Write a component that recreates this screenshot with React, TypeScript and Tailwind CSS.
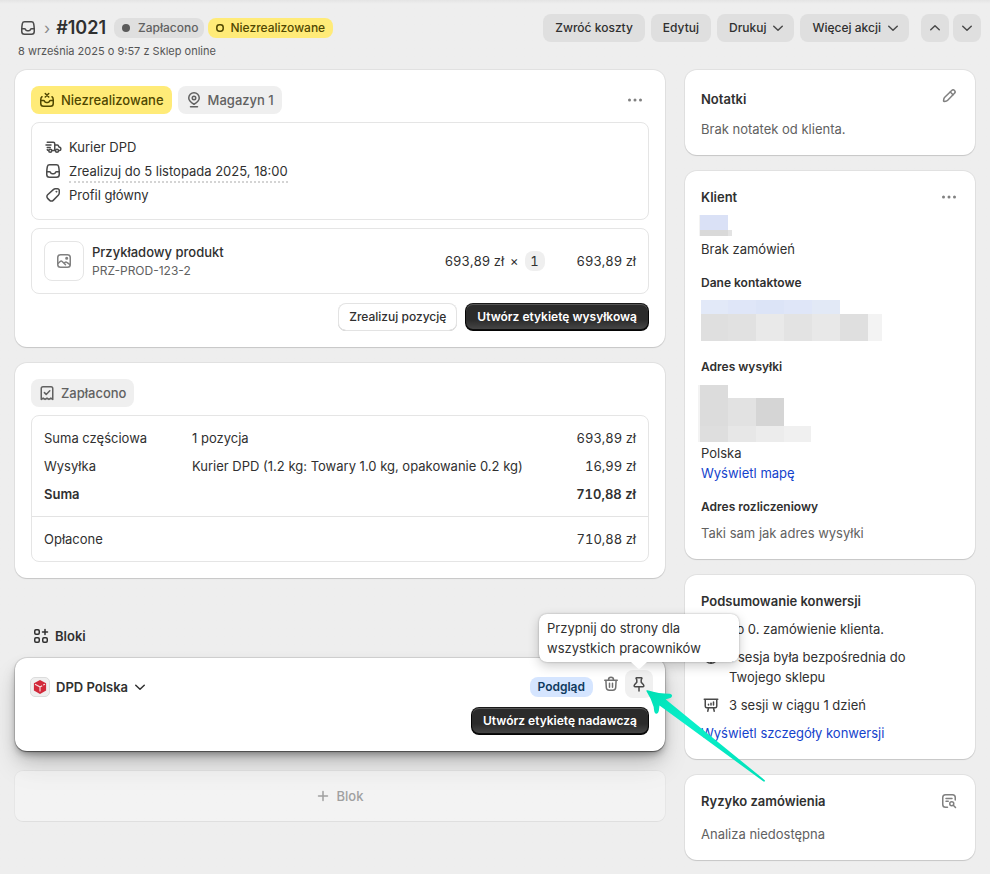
import type { ReactNode } from "react";
import { clsx } from "clsx";

const iconPaths = {
  order: (
    <>
      <path d="M6.6 3.75h6.8a2.3 2.3 0 0 1 2.25 1.85c.4 1.9.6 3.5.6 5.4v2.5a2.75 2.75 0 0 1-2.75 2.75h-7a2.75 2.75 0 0 1-2.75-2.75V11c0-1.9.2-3.5.6-5.4A2.3 2.3 0 0 1 6.6 3.75Z" />
      <path d="M3.9 10.75h2.5c.5 0 .9.3 1.1.7.3.8.9 1.3 1.7 1.3h1.6c.8 0 1.4-.5 1.7-1.3.2-.4.6-.7 1.1-.7h2.5" />
    </>
  ),
  unfulfilled: (
    <>
      <path d="M8.25 3.5l3.5 3.5m0-3.5l-3.5 3.5" />
      <path d="M5 6.75c-.8.5-1.25 1.500-1.250 3v3.750a2.750 2.750 0 0 0 2.750 2.750h7a2.750 2.750 0 0 0 2.750-2.750V9.750c0-1.500-.45-2.500-1.250-3" />
      <path d="M3.900 10.500h2.500c.5 0 .9.3 1.100.7.3.8.9 1.300 1.700 1.300h1.600c.8 0 1.400-.5 1.700-1.300.2-.4.6-.7 1.100-.7h2.500" />
    </>
  ),
  location: (
    <>
      <path d="M10 14.250c2.600-1.500 5.250-3.600 5.250-6.250a5.250 5.250 0 0 0-10.500 0c0 2.650 2.650 4.750 5.250 6.250Z" />
      <circle cx="10" cy="8" r="1.750" />
      <path d="M6.500 16.750h7" />
    </>
  ),
  truck: (
    <>
      <path d="M4.250 5.250h6a1.500 1.500 0 0 1 1.500 1.500v6.750H9M3 8h5M4.250 10.500h3M12 8h2.300c.4 0 .8.2 1 .6l.7 1.400 1.200.5c.4.2.6.5.6.9v.85c0 .7-.5 1.250-1.250 1.250h-.8M5.500 13.500c-.8 0-1.250-.4-1.250-1" />
      <circle cx="7.250" cy="13.750" r="1.500" />
      <circle cx="14" cy="13.750" r="1.500" />
    </>
  ),
  tag: (
    <>
      <path d="M10.600 4.400a2.250 2.250 0 0 1 1.600-.65h2.300a1.750 1.750 0 0 1 1.750 1.750v2.600c0 .7-.25 1.350-.75 1.850l-5.300 5.400a2.500 2.500 0 0 1-3.550 0l-2-2a2.500 2.500 0 0 1 0-3.550Z" />
      <circle cx="13.300" cy="6.700" r=".5" fill="currentColor" strokeWidth=".8" />
    </>
  ),
  image: (
    <>
      <rect x="3.750" y="3.750" width="12.500" height="12.500" rx="2.750" />
      <path d="M4 12.500l2.200-2c.6-.5 1.400-.5 2 0l3.300 3.200M10 12.300l1.100-.9c.5-.4 1.200-.4 1.700 0l3.200 2.300" />
      <circle cx="12.700" cy="7.300" r=".8" fill="currentColor" />
    </>
  ),
  receipt: (
    <>
      <path d="M4.250 16.400V5.500c0-1 .75-1.750 1.750-1.750h8c1 0 1.750.75 1.750 1.750v10.900l-1.900-1.300-1.900 1.300-1.950-1.300-1.950 1.300-1.900-1.300Z" />
      <path d="M7.400 9.600l1.800 1.800 3.600-3.700" />
    </>
  ),
  blocks: (
    <>
      <rect x="3.750" y="3.750" width="4.500" height="4.500" rx="1.200" />
      <rect x="3.750" y="11.750" width="4.500" height="4.500" rx="1.200" />
      <rect x="11.750" y="11.750" width="4.500" height="4.500" rx="1.200" />
      <path d="M14 3.500v5M11.500 6h5" />
    </>
  ),
  edit: (
    <>
      <path d="M12.700 4.500a1.980 1.980 0 0 1 2.800 2.800l-6.800 6.900c-.5.5-1.200.85-1.900.95l-1.700.25c-.35.05-.6-.2-.55-.55l.25-1.700c.1-.7.45-1.350.95-1.850Z" />
      <path d="M11.300 6l2.700 2.700" />
    </>
  ),
  risk: (
    <>
      <path d="M8.500 16.250h-2a2.750 2.750 0 0 1-2.750-2.750v-7a2.750 2.750 0 0 1 2.750-2.750h7a2.750 2.750 0 0 1 2.750 2.750v2.500M7 7.500h6M7 10.250h2.250" />
      <circle cx="12.750" cy="12.750" r="2" />
      <path d="M14.300 14.300l2.200 2.200" />
    </>
  ),
  trash: (
    <path d="M3.750 6.250h12.500M7.500 6v-.25a2.500 2.500 0 0 1 5 0V6M4.900 6.500l.4 7c.1 1.700 1.300 2.750 3 2.750h3.400c1.700 0 2.900-1.050 3-2.750l.4-7M8.500 9.250v4M11.500 9.250v4" />
  ),
  pin: (
    <path d="M7.500 3.750h5c.4 0 .6.4.4.7l-.6 1.100c-.1.2-.1.4-.1.600v2l2.300 2.700c.7.9.3 1.900-.7 1.900H6.200c-1 0-1.400-1-.7-1.900l2.300-2.700v-2c0-.2 0-.4-.1-.6l-.6-1.100c-.2-.3 0-.7.4-.7ZM10 13v4" />
  ),
  sessions: (
    <path d="M3.250 4.250h13.500M4.250 4.500v6.750c0 .8.7 1.500 1.500 1.500h8.500c.8 0 1.500-.7 1.500-1.500V4.500M7.500 13l-.75 3.250M12.500 13l.75 3.250M7.500 9.250v.75M10 8.250V10M12.500 7v3" />
  ),
  globe: (
    <>
      <circle cx="10" cy="10" r="6.250" />
      <path d="M4 10h12M10 4c-3 3.500-3 8.500 0 12M10 4c3 3.500 3 8.500 0 12" />
    </>
  ),
  person: (
    <>
      <circle cx="10" cy="7" r="2.750" />
      <path d="M4.500 15.500c1-2.500 3-3.500 5.500-3.500s4.500 1 5.500 3.500Z" />
    </>
  ),
  chevronDown: <path d="M5.750 8.250L10 12.250l4.250-4" />,
  chevronUp: <path d="M5.750 11.750L10 7.750l4.250 4" />,
  plus: <path d="M10 5.500v9M5.500 10h9" />,
  dots: (
    <g fill="currentColor" stroke="none">
      <circle cx="4.500" cy="10" r="1.500" />
      <circle cx="10" cy="10" r="1.500" />
      <circle cx="15.500" cy="10" r="1.500" />
    </g>
  ),
} as const;

type IconName = keyof typeof iconPaths;

function Icon({ name, className }: { name: IconName; className?: string }) {
  return (
    <svg
      viewBox="0 0 20 20"
      aria-hidden="true"
      fill="none"
      stroke="currentColor"
      strokeWidth="1.5"
      strokeLinecap="round"
      strokeLinejoin="round"
      className={clsx("size-5 shrink-0", className)}
    >
      {iconPaths[name]}
    </svg>
  );
}

function Card({ children, className }: { children: ReactNode; className?: string }) {
  return (
    <section
      className={clsx(
        "rounded-xl bg-white px-4 shadow-[0_0_0_1px_rgba(0,0,0,0.05),0_1px_1px_rgba(0,0,0,0.12)]",
        className,
      )}
    >
      {children}
    </section>
  );
}

function HeaderButton({ children, menu }: { children: ReactNode; menu?: boolean }) {
  return (
    <button
      type="button"
      className={clsx(
        "flex h-7 items-center gap-0.5 rounded-lg bg-[#dfdfdf] pl-3 text-xs font-[550]",
        menu ? "pr-1.5" : "pr-3",
      )}
    >
      {children}
      {menu && <Icon name="chevronDown" className="text-[#4a4a4a]" />}
    </button>
  );
}

function PrimaryButton({ children }: { children: ReactNode }) {
  return (
    <button
      type="button"
      className="h-7 rounded-lg bg-[#2b2b2b] bg-linear-to-b from-transparent from-60% to-white/15 px-3 text-xs font-semibold text-white shadow-[inset_0_-1px_0_1px_rgba(0,0,0,0.8),inset_0_0_0_1px_#1a1a1a,inset_0_1px_0_1px_rgba(255,255,255,0.2)]"
    >
      {children}
    </button>
  );
}

function StatusBadge({ icon, children, warning }: { icon: IconName; children: ReactNode; warning?: boolean }) {
  return (
    <span
      className={clsx(
        "flex h-7 items-center gap-1 rounded-lg pr-2 pl-1.5 font-[550]",
        warning ? "bg-[#ffeb78] text-[#4f4700]" : "bg-[#efefef] text-[#616161]",
      )}
    >
      <Icon name={icon} />
      {children}
    </span>
  );
}

// Pixelated rows that cover customer data
function Redacted({ rows, className }: { rows: { height: string; cells: string[] }[]; className?: string }) {
  return (
    <div aria-hidden="true" className={className}>
      {rows.map((row, i) => (
        <div key={i} className={clsx("flex", row.height)}>
          {row.cells.map((cell, j) => (
            <div key={j} className={cell} />
          ))}
        </div>
      ))}
    </div>
  );
}

const nameRows = [
  { height: "h-[15px]", cells: ["w-px bg-[#f3f3f3]", "w-7 bg-[#dae1f6]"] },
  { height: "h-[6px]", cells: ["w-px bg-[#f3f3f3]", "w-7 bg-[#d9d9d9]", "w-1 bg-[#e3e3e3]"] },
];

const contactRows = [
  {
    height: "h-[14px]",
    cells: ["w-[27px] bg-[#e2e9f8]", "w-7 bg-[#dfe6f8]", "w-7 bg-[#dce4f7]", "w-7 bg-[#dfe6f8]", "w-7 bg-[#e2e9f6]"],
  },
  {
    height: "h-[27px]",
    cells: [
      "w-[27px] bg-[#dfdfdf]",
      "w-7 bg-[#e1e1e1]",
      "w-7 bg-[#e9e9e9]",
      "w-7 bg-[#e3e3e3]",
      "w-7 bg-[#e8e8e8]",
      "w-7 bg-[#dfdfdf]",
      "w-[14px] bg-[#f3f3f3]",
    ],
  },
];

const addressRows = [
  { height: "h-[13px]", cells: ["w-0.5 bg-[#f3f3f3]", "w-7 bg-[#dcdcdc]"] },
  {
    height: "h-7",
    cells: ["w-0.5 bg-[#f3f3f3]", "w-7 bg-[#dcdcdc]", "w-7 bg-[#e2e2e2]", "w-7 bg-[#d5d5d5]"],
  },
  {
    height: "h-4",
    cells: ["w-0.5 bg-[#f3f3f3]", "w-7 bg-[#dedede]", "w-7 bg-[#e7e7e7]", "w-7 bg-[#ececec]", "w-[27px] bg-[#f0f0f0]"],
  },
];

const summary = [
  { label: "Suma częściowa", detail: "1 pozycja", amount: "693,89 zł" },
  { label: "Wysyłka", detail: "Kurier DPD (1.2 kg: Towary 1.0 kg, opakowanie 0.2 kg)", amount: "16,99 zł" },
  { label: "Suma", detail: "", amount: "710,88 zł", strong: true },
];

function Header() {
  return (
    <header className="flex items-start justify-between pr-[9px] pl-[18px]">
      <div>
        <div className="flex h-7 items-center">
          <Icon name="order" className="text-[#4a4a4a]" />
          <span className="mx-1.5 text-base text-[#8a8a8a]">›</span>
          <h1 className="text-lg font-semibold">#1021</h1>
          <span className="ml-2 flex h-5 items-center gap-1 rounded-lg bg-[#dfdfdf] px-1.5 text-xs font-[550] text-[#616161]">
            <span className="mr-1 ml-0.5 size-2 rounded-full bg-[#5a5a5a]" />
            Zapłacono
          </span>
          <span className="ml-1 flex h-5 items-center gap-1 rounded-lg bg-[#ffeb78] px-2 text-xs font-[550] text-[#4f4700]">
            <svg viewBox="0 0 8 8" aria-hidden="true" className="mr-0.5 size-2">
              <rect x="0.800" y="0.800" width="6.400" height="6.400" rx="2.600" fill="none" stroke="currentColor" strokeWidth="1.500" />
            </svg>
            Niezrealizowane
          </span>
        </div>
        <p className="text-[11px] leading-[18px] text-[#555]">8 września 2025 o 9:57 z Sklep online</p>
      </div>
      <div className="flex gap-1.5">
        <HeaderButton>Zwróć koszty</HeaderButton>
        <HeaderButton>Edytuj</HeaderButton>
        <HeaderButton menu>Drukuj</HeaderButton>
        <HeaderButton menu>Więcej akcji</HeaderButton>
        <div className="ml-1.5 flex gap-1">
          <button type="button" aria-label="Poprzednie" className="grid size-7 place-items-center rounded-lg bg-[#dfdfdf] text-[#4a4a4a]">
            <Icon name="chevronUp" />
          </button>
          <button type="button" aria-label="Następne" className="grid size-7 place-items-center rounded-lg bg-[#dfdfdf] text-[#4a4a4a]">
            <Icon name="chevronDown" />
          </button>
        </div>
      </div>
    </header>
  );
}

function FulfillmentCard() {
  return (
    <Card className="py-4">
      <div className="flex items-center gap-1.5">
        <StatusBadge icon="unfulfilled" warning>Niezrealizowane</StatusBadge>
        <StatusBadge icon="location">Magazyn 1</StatusBadge>
        <button type="button" aria-label="Więcej" className="mr-1 ml-auto text-[#808080]">
          <Icon name="dots" />
        </button>
      </div>
      <ul className="mt-2 rounded-lg border border-[#e5e5e5] px-[11px] py-3">
        <li className="flex h-6 items-center gap-1.5">
          <Icon name="truck" className="text-[#4a4a4a]" />
          Kurier DPD
        </li>
        <li className="flex h-6 items-center gap-1.5">
          <Icon name="order" className="text-[#4a4a4a]" />
          <span className="border-y-2 border-t-transparent border-b-[#d4d4d4] [border-bottom-style:dotted]">
            Zrealizuj do 5 listopada 2025, 18:00
          </span>
        </li>
        <li className="flex h-6 items-center gap-1.5">
          <Icon name="tag" className="text-[#4a4a4a]" />
          Profil główny
        </li>
      </ul>
      <div className="mt-2 flex items-center rounded-lg border border-[#e5e5e5] px-3 py-3">
        <div className="grid size-10 place-items-center rounded-lg border border-[#e5e5e5] text-[#808080]">
          <Icon name="image" />
        </div>
        <div className="ml-2 flex-1">
          <p className="font-[550]">Przykładowy produkt</p>
          <p className="text-xs leading-[18px] text-[#616161]">PRZ-PROD-123-2</p>
        </div>
        <p className="flex items-center gap-1.5 tabular-nums">
          693,89 zł <span>×</span>
          <span className="grid size-5 place-items-center rounded-lg bg-[#efefef]">1</span>
        </p>
        <p className="ml-8 tabular-nums">693,89 zł</p>
      </div>
      <div className="mt-[9px] flex justify-end gap-2">
        <button
          type="button"
          className="h-7 rounded-lg bg-white px-[11px] text-xs font-[550] shadow-[inset_0_0_0_1px_#e3e3e3,inset_0_-1px_0_#b5b5b5]"
        >
          Zrealizuj pozycję
        </button>
        <PrimaryButton>Utwórz etykietę wysyłkową</PrimaryButton>
      </div>
    </Card>
  );
}

function PaymentCard() {
  return (
    <Card className="py-4">
      <div className="flex">
        <StatusBadge icon="receipt">Zapłacono</StatusBadge>
      </div>
      <div className="mt-2 rounded-lg border border-[#e5e5e5]">
        <table className="w-full">
          <tbody className="before:block before:h-2 after:block after:h-2">
            {summary.map((row) => (
              <tr key={row.label} className={row.strong ? "font-semibold" : "font-normal"}>
                <th scope="row" className={clsx("w-40 py-1 pl-3 text-left", row.strong ? "font-semibold" : "font-normal")}>
                  {row.label}
                </th>
                <td className="py-1">{row.detail}</td>
                <td className="py-1 pr-3 text-right tabular-nums">{row.amount}</td>
              </tr>
            ))}
          </tbody>
          <tfoot>
            <tr className="border-t border-[#e3e3e3]">
              <th scope="row" colSpan={2} className="py-3 pl-3 text-left font-normal">Opłacone</th>
              <td className="py-3 pr-3 text-right tabular-nums">710,88 zł</td>
            </tr>
          </tfoot>
        </table>
      </div>
    </Card>
  );
}

function PinTooltip() {
  return (
    <div
      role="tooltip"
      className="absolute bottom-[calc(100%+8px)] left-1/2 z-10 w-[200px] -translate-x-1/2 rounded-lg bg-white px-2 py-1 text-left shadow-[0_0_2px_rgba(0,0,0,0.3),0_4px_12px_rgba(0,0,0,0.2)]"
    >
      Przypnij do strony dla wszystkich pracowników
      <svg viewBox="0 0 16 7" aria-hidden="true" className="absolute top-full left-1/2 h-[7px] w-4 -translate-x-1/2 fill-white">
        <path d="M0 0h16L9 6.400q-1 .8-2 0Z" />
      </svg>
    </div>
  );
}

function Pointer() {
  return (
    <svg viewBox="0 0 120 94" aria-hidden="true" className="pointer-events-none absolute top-[19px] left-[20px] z-20 h-[94px] w-[120px]">
      <defs>
        <linearGradient id="pointer" x1="0" y1="0" x2="1" y2="1">
          <stop offset="0" stopColor="#00dfb4" />
          <stop offset=".35" stopColor="#0af0cb" />
          <stop offset="1" stopColor="#00e0b8" />
        </linearGradient>
      </defs>
      <path
        fill="url(#pointer)"
        d="M1.500 2.200Q.8.900 2.500 1.200Q14 4.800 25 4.800Q28 5.500 26.600 8Q25.500 9.600 20.500 10.200L119.800 91.200Q120.500 93 118.500 92.500L14.500 16.500L13.800 22Q13 25.500 10.500 24.500Q9 23.500 8.700 18Q6.500 10 1.500 2.200Z"
      />
    </svg>
  );
}

function BlocksSection() {
  return (
    <section>
      <h2 className="mt-12 flex items-center gap-1 pl-4 font-semibold">
        <Icon name="blocks" />
        Bloki
      </h2>
      <div className="mt-3 rounded-xl bg-white pt-3 pr-4 pb-4 pl-[15px] shadow-[0_0_0_1px_rgba(0,0,0,0.1),0_1px_1px_rgba(0,0,0,0.4),0_4px_6px_-1px_rgba(0,0,0,0.25),0_8px_16px_-4px_rgba(0,0,0,0.25),0_16px_28px_-2px_rgba(0,0,0,0.14)]">
        <div className="flex items-start">
          <button type="button" className="mt-[7px] flex h-5 items-center font-semibold">
            <span className="mr-1.5 grid size-5 place-items-center rounded-[5px] border border-[#dcdcdc] bg-[#efefef]">
              <svg viewBox="0 0 14 14" aria-hidden="true" className="size-[14px]">
                <path fill="#d2293a" d="M7 0l6.100 3.200v7.400L7 14 .9 10.600V3.200Z" />
                <path fill="none" stroke="#f6dfe1" strokeWidth="1.100" d="M2 4.200l5 2.700v4.700M7 6.900l2.200-1.200M10.200 5.100l1.800-.9" />
              </svg>
            </span>
            DPD Polska
            <Icon name="chevronDown" className="ml-0.5" />
          </button>
          <div className="-mr-1 ml-auto flex items-start">
            <span className="mt-[7px] mr-1 h-5 rounded-lg bg-[#d5e5ff] px-2 text-xs/5 font-semibold text-[#103a5e]">Podgląd</span>
            <button type="button" aria-label="Usuń" className="grid size-7 place-items-center text-[#707070]">
              <Icon name="trash" />
            </button>
            <div className="relative">
              <button type="button" aria-label="Przypnij" className="grid size-7 place-items-center rounded-lg bg-[#f0f0f0] text-[#4a4a4a]">
                <Icon name="pin" />
              </button>
              <PinTooltip />
              <Pointer />
            </div>
          </div>
        </div>
        <div className="mt-[9px] flex justify-end">
          <PrimaryButton>Utwórz etykietę nadawczą</PrimaryButton>
        </div>
      </div>
      <button
        type="button"
        className="mt-5 flex h-[50px] w-full items-center justify-center gap-1 rounded-lg bg-white/30 pr-1 font-[550] text-[#a0a0a0] shadow-[0_0_0_1px_rgba(0,0,0,0.03),0_1px_1px_rgba(0,0,0,0.03)]"
      >
        <Icon name="plus" />
        Blok
      </button>
    </section>
  );
}

function Sidebar() {
  return (
    <aside className="space-y-4">
      <Card className="py-4">
        <div className="mb-[7px] flex h-[26px] items-start justify-between">
          <h2 className="pt-[3px] font-semibold">Notatki</h2>
          <button type="button" aria-label="Edytuj notatki" className="text-[#808080]">
            <Icon name="edit" />
          </button>
        </div>
        <p className="text-[#616161]">Brak notatek od klienta.</p>
      </Card>

      <Card className="py-4">
        <div className="flex items-center justify-between">
          <h2 className="font-semibold">Klient</h2>
          <button type="button" aria-label="Więcej" className="text-[#808080]">
            <Icon name="dots" />
          </button>
        </div>
        <Redacted rows={nameRows} className="-ml-0.5 mt-2" />
        <p className="mt-[3px]">Brak zamówień</p>
        <h3 className="mt-[14px] text-xs/5 font-semibold">Dane kontaktowe</h3>
        <Redacted rows={contactRows} className="mt-[7px]" />
        <h3 className="mt-4 text-xs/5 font-semibold">Adres wysyłki</h3>
        <Redacted rows={addressRows} className="-ml-[3px] mt-2" />
        <p className="mt-px">Polska</p>
        <a href="#mapa" className="block text-[#1442cc]">Wyświetl mapę</a>
        <h3 className="mt-[14px] text-xs/5 font-semibold">Adres rozliczeniowy</h3>
        <p className="mt-1.5 text-[#616161]">Taki sam jak adres wysyłki</p>
      </Card>

      <Card className="py-4">
        <h2 className="font-semibold">Podsumowanie konwersji</h2>
        <ul className="mt-2 space-y-2">
          <li className="flex items-start gap-2">
            <Icon name="person" className="text-[#4a4a4a]" />
            To 0. zamówienie klienta.
          </li>
          <li className="flex items-start gap-2">
            <Icon name="globe" className="text-[#4a4a4a]" />
            1 sesja była bezpośrednia do Twojego sklepu
          </li>
          <li className="flex items-start gap-2">
            <Icon name="sessions" className="text-[#4a4a4a]" />
            3 sesji w ciągu 1 dzień
          </li>
        </ul>
        <a href="#konwersja" className="mt-2 block text-[#1442cc]">Wyświetl szczegóły konwersji</a>
      </Card>

      <Card className="py-4">
        <div className="flex items-center justify-between">
          <h2 className="font-semibold">Ryzyko zamówienia</h2>
          <Icon name="risk" className="text-[#808080]" />
        </div>
        <p className="mt-[13px] text-[#616161]">Analiza niedostępna</p>
      </Card>
    </aside>
  );
}

export default function App() {
  return (
    <div className="min-h-screen bg-[#eee] bg-linear-to-b from-[#e4e4e4] to-[#eee] to-[4px] pt-[14px] pb-[14px] font-['Inter','Liberation_Sans',sans-serif] text-[13px]/5 text-[#303030]">
      <Header />
      <main className="mt-[10px] grid grid-cols-[minmax(0,65fr)_minmax(0,29fr)] items-start gap-5 px-[15px]">
        <div>
          <div className="space-y-4">
            <FulfillmentCard />
            <PaymentCard />
          </div>
          <BlocksSection />
        </div>
        <Sidebar />
      </main>
    </div>
  );
}
